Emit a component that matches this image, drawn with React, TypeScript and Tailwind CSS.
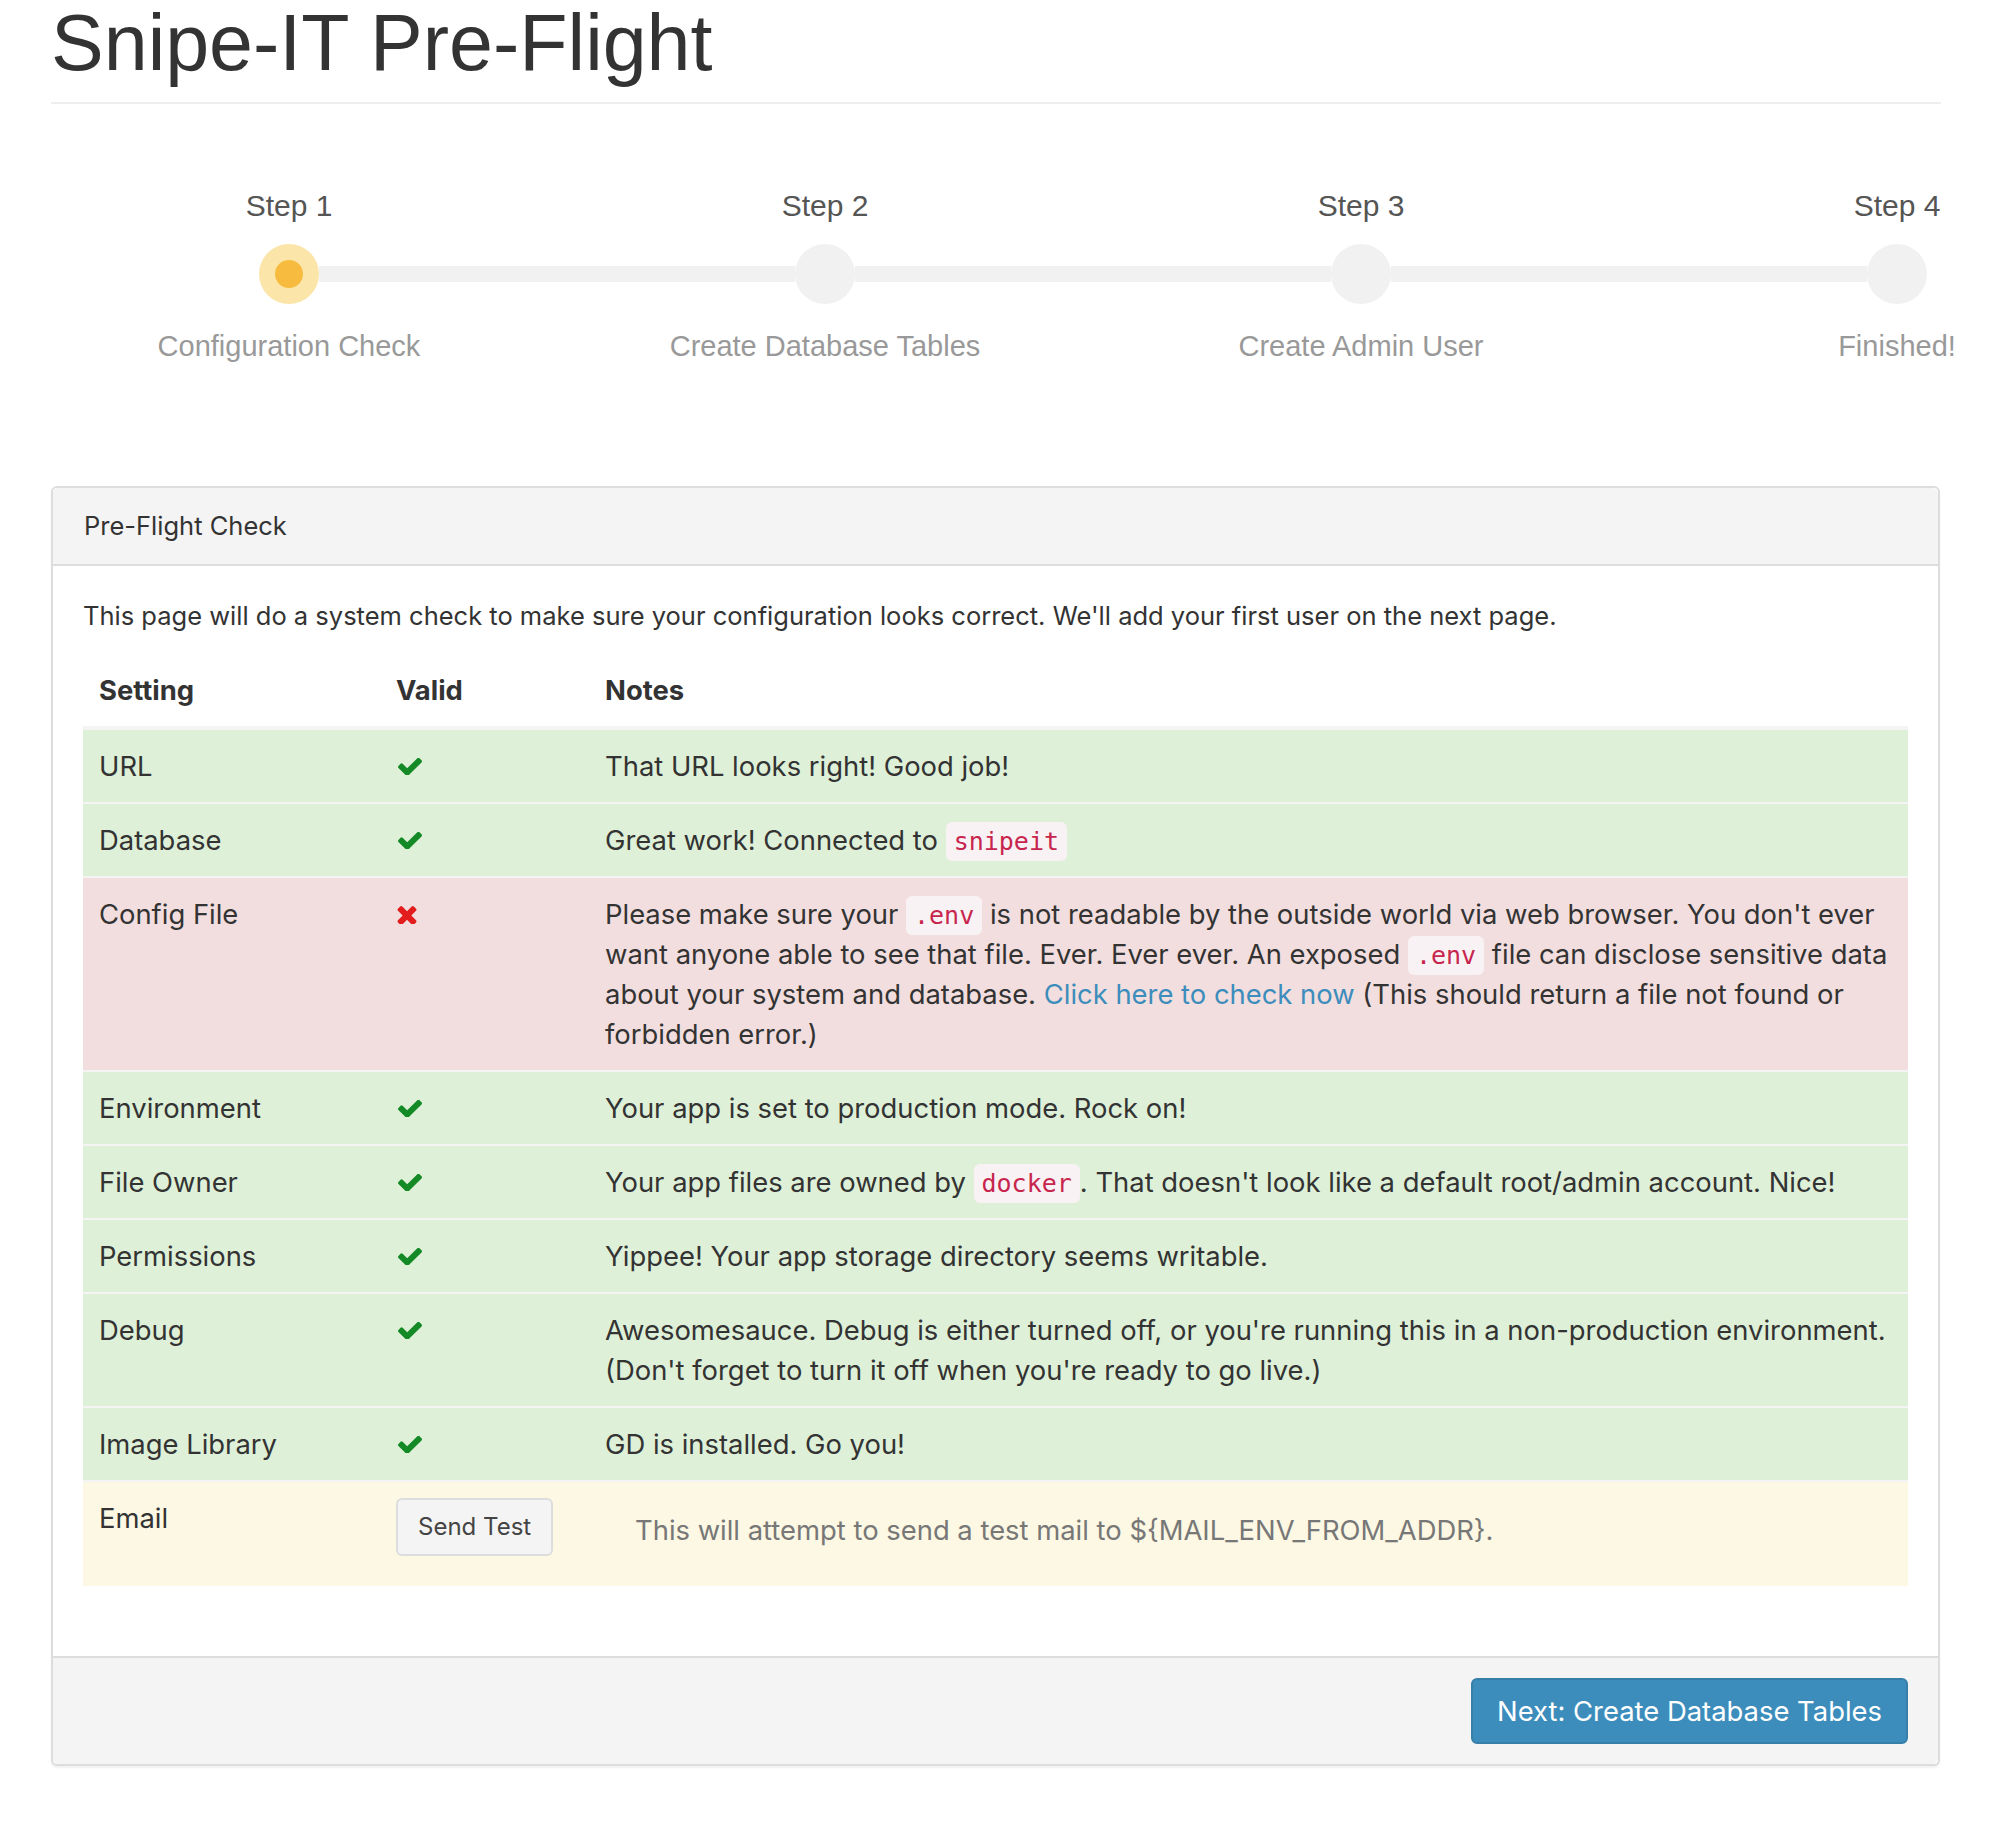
import React from 'react'

type Row = { setting: string; ok: boolean; notes: React.ReactNode; tone: 'green' | 'red' }

const steps = [
    { title: 'Step 1', label: 'Configuration Check' },
    { title: 'Step 2', label: 'Create Database Tables' },
    { title: 'Step 3', label: 'Create Admin User' },
    { title: 'Step 4', label: 'Finished!' },
]

function Code({ children }: { children: React.ReactNode }) {
    return (
        <code className="font-['DejaVu_Sans_Mono',monospace] text-[25px] leading-none text-[#c7254e] bg-[#f9f2f4] rounded-[6px] px-[8px] py-[5px]">
            {children}
        </code>
    )
}

function Check() {
    return (
        <svg width="24" height="17" viewBox="121 370 1550 1060" className="ml-[2px]">
            <path
                fill="#138a25"
                d="M1671 566q0 40-28 68l-724 724-136 136q-28 28-68 28t-68-28l-136-136-362-362q-28-28-28-68t28-68l136-136q28-28 68-28t68 28l294 295 656-657q28-28 68-28t68 28l136 136q28 28 28 68z"
            />
        </svg>
    )
}

function Cross() {
    return (
        <svg width="20" height="19" viewBox="302 302 1188 1188" className="ml-[1px]">
            <path
                fill="#e31d1d"
                d="M1490 1322q0 40-28 68l-136 136q-28 28-68 28t-68-28l-294-294-294 294q-28 28-68 28t-68-28l-136-136q-28-28-28-68t28-68l294-294-294-294q-28-28-28-68t28-68l136-136q28-28 68-28t68 28l294 294 294-294q28-28 68-28t68 28l136 136q28 28 28 68t-28 68l-294 294 294 294q28 28 28 68z"
            />
        </svg>
    )
}

const rows: Row[] = [
    { setting: 'URL', ok: true, tone: 'green', notes: 'That URL looks right! Good job!' },
    { setting: 'Database', ok: true, tone: 'green', notes: <>Great work! Connected to <Code>snipeit</Code></> },
    {
        setting: 'Config File',
        ok: false,
        tone: 'red',
        notes: (
            <>
                Please make sure your <Code>.env</Code> is not readable by the outside world via web browser. You don't ever want anyone able to see that file. Ever. Ever ever. An exposed <Code>.env</Code> file can disclose sensitive data about your system and database.{' '}
                <a className="text-[#3c8dbc]">Click here to check now</a> (This should return a file not found or forbidden error.)
            </>
        ),
    },
    { setting: 'Environment', ok: true, tone: 'green', notes: 'Your app is set to production mode. Rock on!' },
    {
        setting: 'File Owner',
        ok: true,
        tone: 'green',
        notes: <>Your app files are owned by <Code>docker</Code>. That doesn't look like a default root/admin account. Nice!</>,
    },
    { setting: 'Permissions', ok: true, tone: 'green', notes: 'Yippee! Your app storage directory seems writable.' },
    {
        setting: 'Debug',
        ok: true,
        tone: 'green',
        notes: "Awesomesauce. Debug is either turned off, or you're running this in a non-production environment. (Don't forget to turn it off when you're ready to go live.)",
    },
    { setting: 'Image Library', ok: true, tone: 'green', notes: 'GD is installed. Go you!' },
]

export default function App() {
    return (
        <div className="min-h-screen bg-white font-['Inter',sans-serif] text-[#333] pb-[65px]">
            <div className="pl-[51px] pr-[55px]">
                <h1 className="font-['Liberation_Sans',Arial,sans-serif] text-[79px] leading-[86px] text-[#333] pb-[16px] border-b-2 border-[#eee]">
                    Snipe-IT Pre-Flight
                </h1>
            </div>

            <div className="overflow-hidden mt-[84px]">
                <div className="flex w-max pl-[21px] font-['Liberation_Sans',Arial,sans-serif]">
                    {steps.map((s, i) => (
                        <div key={s.title} className="w-[536px] flex flex-col items-center">
                            <div className="text-[30px] leading-[36px] text-[#555]">{s.title}</div>
                            <div className="mt-[20px] flex items-center w-full h-[60px]">
                                <div className={i > 0 ? 'flex-1 h-[16px] bg-[#f1f1f1]' : 'flex-1 h-[16px]'} />
                                {i === 0 ? (
                                    <div className="w-[60px] h-[60px] rounded-full bg-[#fbe5a9] flex items-center justify-center">
                                        <div className="w-[28px] h-[28px] rounded-full bg-[#f7bc3f]" />
                                    </div>
                                ) : (
                                    <div className="w-[60px] h-[60px] rounded-full bg-[#f1f1f1]" />
                                )}
                                <div className={i < 3 ? 'flex-1 h-[16px] bg-[#f1f1f1]' : 'flex-1 h-[16px]'} />
                            </div>
                            <div className="mt-[24px] text-[29px] leading-[36px] text-[#999]">{s.label}</div>
                        </div>
                    ))}
                </div>
            </div>

            <div className="mt-[122px] ml-[51px] mr-[56px] border-2 border-[#ddd] rounded-[6px] bg-white shadow-[0_2px_2px_rgba(0,0,0,0.06)]">
                <div className="bg-[#f4f4f4] border-b-2 border-[#ddd] rounded-t-[6px] px-[31px] py-[20px] text-[25.5px] leading-[36px]">
                    Pre-Flight Check
                </div>
                <div className="px-[30px] pt-[30px] pb-[30px]">
                    <p className="text-[25.5px] leading-[40px] mb-[18px]">
                        This page will do a system check to make sure your configuration looks correct. We'll add your first user on the next page.
                    </p>
                    <table className="w-full table-fixed mb-[40px] text-[27.4px] leading-[40px]">
                        <colgroup>
                            <col className="w-[297px]" />
                            <col className="w-[209px]" />
                            <col />
                        </colgroup>
                        <thead>
                            <tr>
                                <th className="text-left font-bold p-[16px] border-b-4 border-[#f4f4f4]">Setting</th>
                                <th className="text-left font-bold p-[16px] border-b-4 border-[#f4f4f4]">Valid</th>
                                <th className="text-left font-bold p-[16px] border-b-4 border-[#f4f4f4]">Notes</th>
                            </tr>
                        </thead>
                        <tbody>
                            {rows.map((r) => (
                                <tr key={r.setting} className={r.tone === 'red' ? 'bg-[#f2dede]' : 'bg-[#dff0d8]'}>
                                    <td className="p-[16px] align-top border-t-2 border-[#f4f4f4]">{r.setting}</td>
                                    <td className="p-[16px] align-top border-t-2 border-[#f4f4f4]">
                                        <div className="h-[40px] flex items-center">{r.ok ? <Check /> : <Cross />}</div>
                                    </td>
                                    <td className="p-[16px] align-top border-t-2 border-[#f4f4f4]">{r.notes}</td>
                                </tr>
                            ))}
                            <tr className="bg-[#fcf8e3]">
                                <td className="p-[16px] align-top border-t-2 border-[#f4f4f4]">Email</td>
                                <td className="p-[16px] align-top border-t-2 border-[#f4f4f4]">
                                    <button className="block mb-[14px] border-2 border-[#ddd] bg-[#f4f4f4] rounded-[6px] px-[20px] py-[9px] text-[24px] leading-[36px] text-[#444]">
                                        Send Test
                                    </button>
                                </td>
                                <td className="p-[16px] align-top border-t-2 border-[#f4f4f4]">
                                    <span className="block pl-[30px] pt-[12px] text-[#777]">
                                        This will attempt to send a test mail to {'${MAIL_ENV_FROM_ADDR}'}.
                                    </span>
                                </td>
                            </tr>
                        </tbody>
                    </table>
                </div>
                <div className="bg-[#f4f4f4] border-t-2 border-[#ddd] rounded-b-[6px] px-[30px] py-[20px] flex justify-end">
                    <button className="bg-[#3c8dbc] border-2 border-[#367fa9] rounded-[6px] px-[24px] py-[11px] text-[27.4px] leading-[40px] text-white">
                        Next: Create Database Tables
                    </button>
                </div>
            </div>
        </div>
    )
}
